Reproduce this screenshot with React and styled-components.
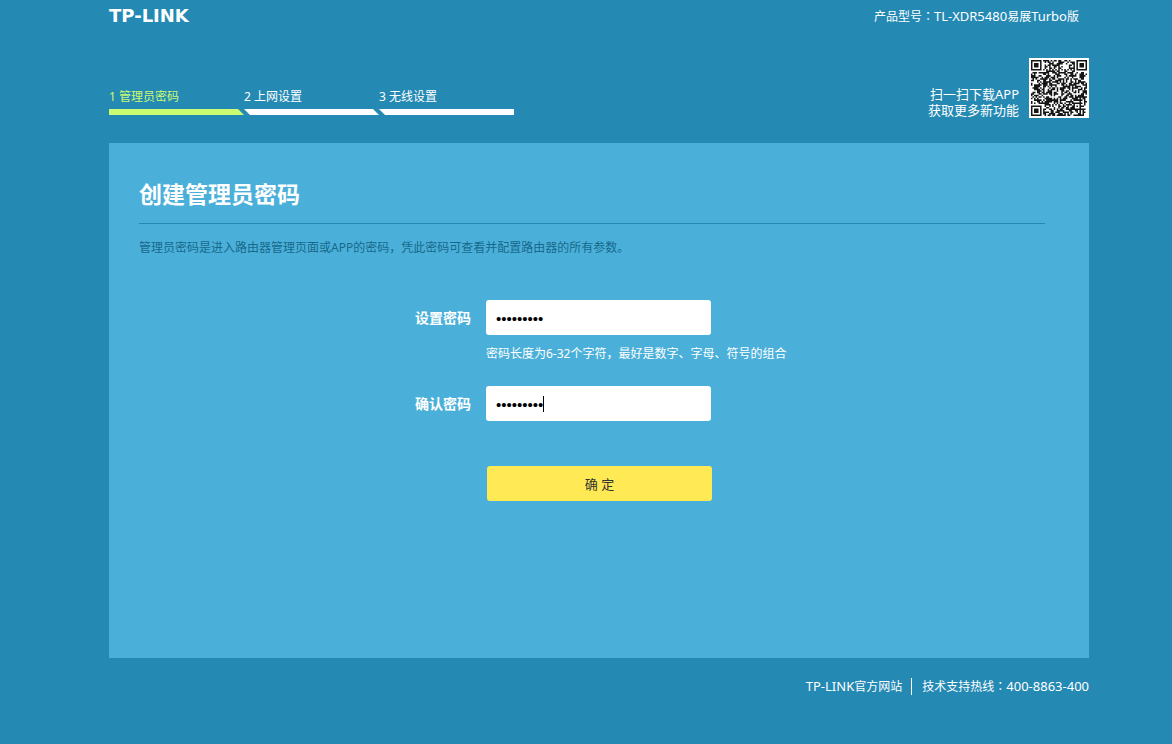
import React from "react";
import styled, { createGlobalStyle } from "styled-components";

const GlobalStyle = createGlobalStyle`
  *, *::before, *::after { box-sizing: border-box; }
  body {
    margin: 0;
    background: #2489b3;
    color: #fff;
    font: 12px/16px "Noto Sans", "Noto Sans CJK SC", sans-serif;
  }
`;

const Page = styled.div`
  padding: 0 83px 48px 109px;
`;

const TopBar = styled.header`
  display: flex;
  justify-content: space-between;
  align-items: center;
  height: 32px;
  padding-right: 10px;
`;

const Logo = styled.a`
  color: #fff;
  text-decoration: none;
  font: bold 18px/20px "DejaVu Sans", sans-serif;
`;

const Colon = styled.span`
  font-family: "Noto Sans CJK JP", sans-serif;
  line-height: 0;
`;

const Latin = styled.span`
  font-size: 13px;
`;

const Guide = styled.div`
  display: flex;
  justify-content: space-between;
  align-items: flex-end;
  padding: 26px 0 25px;
`;

const Steps = styled.ol`
  display: flex;
  list-style: none;
  margin: 0 0 3px;
  padding: 0;
`;

const Step = styled.li`
  width: 135px;
  color: ${(p) => (p.$active ? "#cbfb72" : "#fff")};

  &::after {
    content: "";
    display: block;
    height: 6px;
    margin-top: 4px;
    background: currentColor;
    clip-path: polygon(
      0 0,
      ${(p) => (p.$last ? "100%" : "calc(100% - 6px)")} 0,
      100% 100%,
      ${(p) => (p.$first ? "0" : "6px")} 100%
    );
  }
`;

const AppPromo = styled.div`
  display: flex;
  align-items: flex-end;
  gap: 10px;
`;

const PromoText = styled.p`
  margin: 0;
  font-size: 13px;
  text-align: right;
`;

const QrImage = styled.svg`
  display: block;
  width: 60px;
  height: 60px;
  background: #fff;
`;

const Panel = styled.main`
  min-height: 515px;
  padding-top: 36px;
  background: #4bb0d9;
`;

const Intro = styled.div`
  margin: 0 44px 0 30px;
`;

const Title = styled.h1`
  margin: 0;
  padding-bottom: 14px;
  border-bottom: 1px solid #2489b3;
  font-size: 23px;
  line-height: 30px;
`;

const Description = styled.p`
  margin: 16px 0 0;
  color: #17698c;
`;

const Form = styled.form`
  display: grid;
  grid-template-columns: 1fr 226px 1fr;
  margin-top: 44px;
`;

const Label = styled.label`
  grid-column: 1;
  justify-self: end;
  align-self: center;
  padding-right: 15px;
  font-size: 14px;
  font-weight: bold;
`;

const Field = styled.div`
  position: relative;
  grid-column: 2;
  width: 225px;
`;

const PasswordInput = styled.input`
  display: block;
  width: 100%;
  height: 35px;
  padding: 2px 10px 0;
  border: 0;
  border-radius: 3px;
  outline: none;
  background: #fff;
  color: #000;
  font: 15px "Liberation Sans", sans-serif;
`;

const Caret = styled.span`
  position: absolute;
  left: 57px;
  top: 10px;
  width: 1px;
  height: 16px;
  background: #000;
  pointer-events: none;
`;

const Hint = styled.p`
  grid-column: 2 / -1;
  margin: 11px 0 24px;
`;

const SubmitButton = styled.button`
  grid-column: 2;
  justify-self: end;
  width: 225px;
  height: 35px;
  margin-top: 45px;
  border: 0;
  border-radius: 3px;
  background: #ffea55;
  color: #333;
  font: 13px "Noto Sans", "Noto Sans CJK SC", sans-serif;
  cursor: pointer;
`;

const Footer = styled.footer`
  display: flex;
  justify-content: flex-end;
  padding-top: 20px;
`;

const FooterLink = styled.a`
  padding-right: 9px;
  border-right: 1px solid #fff;
  color: #fff;
  text-decoration: none;
`;

const Hotline = styled.span`
  padding-left: 10px;
`;

const QR_SIZE = 37;

const ring = (x, y, cx, cy) => Math.max(Math.abs(x - cx), Math.abs(y - cy));

function isDark(x, y) {
  const end = QR_SIZE - 4;
  for (const [cx, cy] of [[3, 3], [end, 3], [3, end]]) {
    const d = ring(x, y, cx, cy);
    if (d <= 4) return d <= 1 || d === 3;
  }
  const a = ring(x, y, QR_SIZE - 7, QR_SIZE - 7);
  if (a <= 2) return a !== 1;
  if (x === 6 || y === 6) return (x + y) % 2 === 0;
  let h = Math.imul(x + 11, 374761393) ^ Math.imul(y + 7, 668265263);
  h = Math.imul(h ^ (h >>> 13), 1274126177);
  return ((h ^ (h >>> 16)) >>> 0) % 100 < 57;
}

function qrPath() {
  let d = "";
  for (let y = 0; y < QR_SIZE; y++) {
    for (let x = 0; x < QR_SIZE; x++) {
      if (isDark(x, y)) d += `M${x} ${y}h1v1h-1z`;
    }
  }
  return d;
}

function QrCode() {
  return (
    <QrImage viewBox="-1.3 -1.3 39.6 39.6" role="img" aria-label="APP">
      <path d={qrPath()} fill="#151515" />
    </QrImage>
  );
}

const steps = ["管理员密码", "上网设置", "无线设置"];

export default function App() {
  return (
    <>
      <GlobalStyle />
      <Page>
        <TopBar>
          <Logo href="#">TP-LINK</Logo>
          <span>
            产品型号<Colon>：</Colon>
            <Latin>TL-XDR5480</Latin>易展<Latin>Turbo</Latin>版
          </span>
        </TopBar>
        <Guide>
          <Steps>
            {steps.map((name, i) => (
              <Step
                key={name}
                $active={i === 0}
                $first={i === 0}
                $last={i === steps.length - 1}
              >
                {i + 1} {name}
              </Step>
            ))}
          </Steps>
          <AppPromo>
            <PromoText>
              扫一扫下载APP
              <br />
              获取更多新功能
            </PromoText>
            <QrCode />
          </AppPromo>
        </Guide>
        <Panel>
          <Intro>
            <Title>创建管理员密码</Title>
            <Description>
              管理员密码是进入路由器管理页面或APP的密码，凭此密码可查看并配置路由器的所有参数。
            </Description>
          </Intro>
          <Form onSubmit={(e) => e.preventDefault()}>
            <Label htmlFor="password">设置密码</Label>
            <Field>
              <PasswordInput id="password" type="password" defaultValue="admin1234" />
            </Field>
            <Hint>密码长度为6-32个字符，最好是数字、字母、符号的组合</Hint>
            <Label htmlFor="confirm">确认密码</Label>
            <Field>
              <PasswordInput id="confirm" type="password" defaultValue="admin1234" />
              <Caret />
            </Field>
            <SubmitButton type="submit">确 定</SubmitButton>
          </Form>
        </Panel>
        <Footer>
          <FooterLink href="#">
            <Latin>TP-LINK</Latin>官方网站
          </FooterLink>
          <Hotline>
            技术支持热线<Colon>：</Colon>
            <Latin>400-8863-400</Latin>
          </Hotline>
        </Footer>
      </Page>
    </>
  );
}
